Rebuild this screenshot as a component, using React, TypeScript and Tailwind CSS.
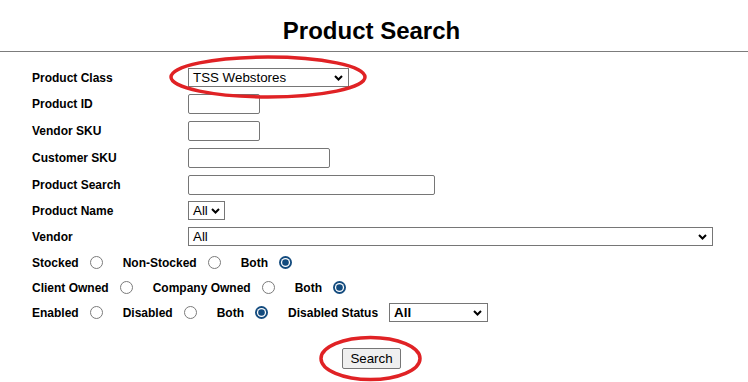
import React from 'react';

const font = { fontFamily: '"Liberation Sans", Arial, sans-serif' };

function Chevron() {
  return (
    <svg width="9" height="6" viewBox="0 0 9 6" className="shrink-0">
      <path d="M1 1 L4.5 4.5 L8 1" fill="none" stroke="#000" strokeWidth="2" />
    </svg>
  );
}

function FakeSelect({ value, width }: { value: string; width: string }) {
  return (
    <div
      className={`flex h-[19px] items-center justify-between border border-[#767676] bg-white pl-[4px] pr-[5px] text-[13.33px] text-black ${width}`}
    >
      <span className="leading-none">{value}</span>
      <Chevron />
    </div>
  );
}

function TextBox({ width }: { width: string }) {
  return <input type="text" className={`h-[20px] rounded-[2px] border border-[#767676] bg-white ${width}`} />;
}

function Radio({ checked }: { checked?: boolean }) {
  return (
    <svg width="13" height="13" viewBox="0 0 13 13" className="shrink-0">
      {checked ? (
        <>
          <circle cx="6.5" cy="6.5" r="6.5" fill="#134b7e" />
          <circle cx="6.5" cy="6.5" r="4.6" fill="#fff" />
          <circle cx="6.5" cy="6.5" r="3.3" fill="#134b7e" />
        </>
      ) : (
        <circle cx="6.5" cy="6.5" r="6" fill="#fff" stroke="#7a7a7a" strokeWidth="1" />
      )}
    </svg>
  );
}

type Opt = { label: string; checked?: boolean };

function RadioRow({ options, children }: { options: Opt[]; children?: React.ReactNode }) {
  return (
    <div className="flex h-[25px] items-center text-[12px] font-bold text-black">
      {options.map((o, i) => (
        <div key={i} className={`flex items-center ${i > 0 ? 'ml-[20px]' : ''}`}>
          <span>{o.label}</span>
          <span className="ml-[11px] flex">
            <Radio checked={o.checked} />
          </span>
        </div>
      ))}
      {children}
    </div>
  );
}

function FieldRow({ label, h, children }: { label: string; h: string; children: React.ReactNode }) {
  return (
    <div className={`flex items-center ${h}`}>
      <span className="w-[156px] text-[12px] font-bold text-black">{label}</span>
      {children}
    </div>
  );
}

export default function App() {
  return (
    <div className="relative h-[382px] w-[748px] overflow-hidden bg-white" style={font}>
      <div className="w-[743px] pt-[17px] text-center">
        <h1 className="h-[28px] text-[24px] leading-[28px] font-bold text-black">Product Search</h1>
      </div>
      <div className="mt-[6px] h-px w-full bg-[#7c7c7c]" />

      <div className="mt-[13px] pl-[32px]">
        <FieldRow label="Product Class" h="h-[25px]">
          <FakeSelect value="TSS Webstores" width="w-[161px]" />
        </FieldRow>
        <FieldRow label="Product ID" h="h-[27px]">
          <TextBox width="w-[72px]" />
        </FieldRow>
        <FieldRow label="Vendor SKU" h="h-[27px]">
          <TextBox width="w-[72px]" />
        </FieldRow>
        <FieldRow label="Customer SKU" h="h-[27px]">
          <TextBox width="w-[142px]" />
        </FieldRow>
        <FieldRow label="Product Search" h="h-[27px]">
          <TextBox width="w-[247px]" />
        </FieldRow>
        <FieldRow label="Product Name" h="h-[25px]">
          <FakeSelect value="All" width="w-[37px] !pr-[4px]" />
        </FieldRow>
        <FieldRow label="Vendor" h="h-[27px]">
          <FakeSelect value="All" width="w-[525px]" />
        </FieldRow>

        <RadioRow options={[{ label: 'Stocked' }, { label: 'Non-Stocked' }, { label: 'Both', checked: true }]} />
        <RadioRow options={[{ label: 'Client Owned' }, { label: 'Company Owned' }, { label: 'Both', checked: true }]} />
        <RadioRow options={[{ label: 'Enabled' }, { label: 'Disabled' }, { label: 'Both', checked: true }]}>
          <span className="ml-[20px]">Disabled Status</span>
          <div className="ml-[11px]">
            <FakeSelect value="All" width="w-[99px]" />
          </div>
        </RadioRow>
      </div>

      <div className="mt-[23px] flex w-[743px] justify-center">
        <button className="h-[21px] rounded-[2px] border border-[#767676] bg-[#efefef] px-[7px] text-[13.33px] leading-none text-black">
          Search
        </button>
      </div>

      <svg className="pointer-events-none absolute inset-0" width="748" height="382">
        <ellipse cx="268" cy="77" rx="97" ry="20" fill="none" stroke="#e02225" strokeWidth="3.5" />
        <ellipse cx="370.5" cy="358.5" rx="49.5" ry="21" fill="none" stroke="#e02225" strokeWidth="3.5" />
      </svg>
    </div>
  );
}
